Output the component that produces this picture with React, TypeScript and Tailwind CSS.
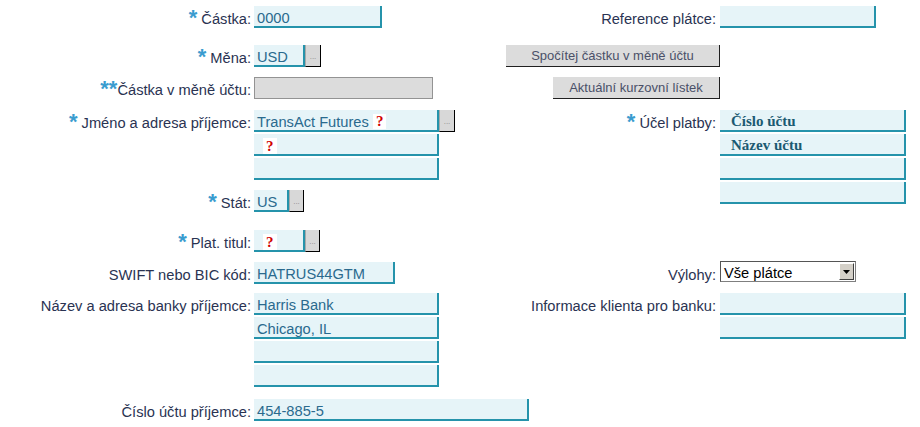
import React from 'react'
import clsx from 'clsx'

const Star = ({ n = 1 }: { n?: number }) => (
  <span
    className={clsx(
      'relative -top-[1px] text-[22px] font-bold leading-none text-[#3a9ccf]',
      n === 2 ? 'mr-0' : 'mr-[4px]'
    )}
  >
    {n === 2 ? '**' : '*'}
  </span>
)

const Q = () => (
  <span className="bg-white px-[3px] font-['Liberation_Serif',serif] text-[15px] font-bold leading-[15px] text-[#d00000]">?</span>
)

const Label = ({ children, right }: { children: React.ReactNode; right?: boolean }) => (
  <div
    className={clsx(
      'flex h-[22px] items-center justify-end whitespace-nowrap pt-[3px] text-[#2a3352]',
      right ? 'pr-[4px]' : 'pr-[3px]'
    )}
  >
    {children}
  </div>
)

const Field = ({ w, children, serif }: { w: string; children?: React.ReactNode; serif?: boolean }) => (
  <div
    className={clsx(
      'flex h-[22px] shrink-0 items-center whitespace-nowrap border-r-2 border-b-2 border-[#2593ab] bg-[#e6f4f8] pt-[3px]',
      serif
        ? "pl-[11px] font-['Liberation_Serif',serif] text-[15px] font-bold text-[#1b5a72]"
        : 'pl-[3px] text-[#2a6a8e]',
      w
    )}
  >
    {children}
  </div>
)

const Dots = ({ w = 'w-[16px]' }: { w?: string }) => (
  <div
    className={clsx(
      'flex h-[22px] items-end justify-center border-r border-b border-l border-black border-l-[#a8a8a8] bg-[#d8d8d8] pb-[5px] text-[8px] leading-[8px] text-[#8a8a8a]',
      w
    )}
  >
    ...
  </div>
)

const GrayButton = ({ w, children }: { w: string; children: React.ReactNode }) => (
  <div
    className={clsx(
      'flex h-[22px] items-center justify-center justify-self-end border-r border-b border-[#202020] bg-[#dcdcdc] pt-[1px] text-[13px] text-[#4a5068]',
      w
    )}
  >
    {children}
  </div>
)

export default function App() {
  return (
    <div className="h-[427px] w-[920px] overflow-hidden bg-white pt-[6px] font-['Liberation_Sans',Arial,sans-serif] text-[14.67px]">
      <div className="grid grid-cols-[254px_216px_250px_200px] grid-rows-[39px_32px_33px_80px_40px_32px_31px_106px_auto] items-start">
        {/* row 1 */}
        <Label>
          <Star />
          Částka:
        </Label>
        <Field w="w-[128px]">0000</Field>
        <Label right>Reference plátce:</Label>
        <Field w="w-[156px]" />

        {/* row 2 */}
        <Label>
          <Star />
          Měna:
        </Label>
        <div className="flex">
          <Field w="w-[51px]">USD</Field>
          <Dots />
        </div>
        <GrayButton w="w-[214px]">Spočítej částku v měně účtu</GrayButton>
        <div />

        {/* row 3 */}
        <Label>
          <Star n={2} />
          Částka v měně účtu:
        </Label>
        <div className="h-[22px] w-[179px] border border-[#939393] bg-[#dcdcdc]" />
        <GrayButton w="w-[167px]">Aktuální kurzovní lístek</GrayButton>
        <div />

        {/* row 4 */}
        <Label>
          <Star />
          Jméno a adresa příjemce:
        </Label>
        <div className="flex flex-col gap-[2px]">
          <div className="flex">
            <Field w="w-[185px]">
              TransAct Futures&nbsp;<Q />
            </Field>
            <Dots />
          </div>
          <Field w="w-[185px]">
            <span className="ml-[6px]">
              <Q />
            </span>
          </Field>
          <Field w="w-[185px]" />
        </div>
        <div className="row-span-2">
          <Label right>
            <Star />
            Účel platby:
          </Label>
        </div>
        <div className="row-span-2 flex flex-col gap-[2px]">
          <Field w="w-[186px]" serif>
            Číslo účtu
          </Field>
          <Field w="w-[186px]" serif>
            Název účtu
          </Field>
          <Field w="w-[186px]" />
          <Field w="w-[186px]" />
        </div>

        {/* row 5 */}
        <Label>
          <Star />
          Stát:
        </Label>
        <div className="flex">
          <Field w="w-[35px]">US</Field>
          <Dots w="w-[15px]" />
        </div>

        {/* row 6 */}
        <Label>
          <Star />
          Plat. titul:
        </Label>
        <div className="flex">
          <Field w="w-[51px]">
            <span className="ml-[6px]">
              <Q />
            </span>
          </Field>
          <Dots w="w-[15px]" />
        </div>
        <div />
        <div />

        {/* row 7 */}
        <Label>SWIFT nebo BIC kód:</Label>
        <Field w="w-[141px]">HATRUS44GTM</Field>
        <Label right>Výlohy:</Label>
        <div className="-mt-[1px] flex h-[21px] w-[136px] items-center border border-[#7f7f7f] border-t-[#555] border-l-[#555] bg-white">
          <span className="flex-1 pt-[2px] pl-[3px] text-black">Vše plátce</span>
          <div className="mr-[1px] flex h-[17px] w-[15px] items-center justify-center border border-white border-r-[#404040] border-b-[#404040] bg-[#d4d0c8]">
            <svg width="7" height="4" viewBox="0 0 7 4">
              <path d="M0 0h7L3.5 4z" fill="#000" />
            </svg>
          </div>
        </div>

        {/* row 8 */}
        <Label>Název a adresa banky příjemce:</Label>
        <div className="flex flex-col gap-[2px]">
          <Field w="w-[185px]">Harris Bank</Field>
          <Field w="w-[185px]">Chicago, IL</Field>
          <Field w="w-[185px]" />
          <Field w="w-[185px]" />
        </div>
        <Label right>Informace klienta pro banku:</Label>
        <div className="flex flex-col gap-[2px]">
          <Field w="w-[186px]" />
          <Field w="w-[186px]" />
        </div>

        {/* row 9 */}
        <Label>Číslo účtu příjemce:</Label>
        <div className="col-span-2">
          <Field w="w-[275px]">454-885-5</Field>
        </div>
        <div />
      </div>
    </div>
  )
}
